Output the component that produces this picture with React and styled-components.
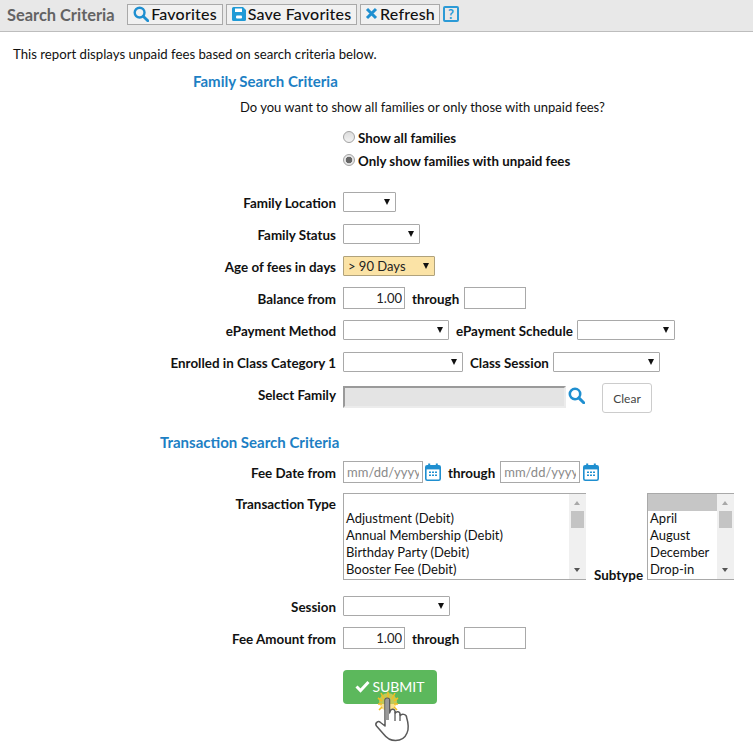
import React from 'react';
import styled, { createGlobalStyle } from 'styled-components';

const GlobalStyle = createGlobalStyle`
  html, body { margin: 0; padding: 0; background: #fff; }
  body { font-family: Lato, "Open Sans", sans-serif; font-size: 13px; color: #111; }
`;

const Page = styled.div`
  position: relative;
  width: 753px;
  height: 747px;
  overflow: hidden;
`;

const Toolbar = styled.div`
  display: flex;
  align-items: center;
  height: 32px;
  box-sizing: border-box;
  padding: 0 0 3px 7px;
  background: #e8e8e8;
  border-bottom: 1px solid #bdbdbd;
`;

const ToolbarTitle = styled.div`
  width: 120px;
  font-size: 16.4px;
  font-weight: 700;
  color: #636363;
`;

const ToolButton = styled.button`
  display: flex;
  align-items: center;
  justify-content: center;
  gap: 2px;
  width: ${p => p.$width}px;
  height: 21px;
  margin-right: 3px;
  padding: 0 0 1px;
  border: 1px solid #a9a9a9;
  background: #f1f1f1;
  font-family: inherit;
  font-size: 16px;
  font-weight: 500;
  letter-spacing: 0.2px;
  color: #111;
`;

const HelpBox = styled.span`
  display: flex;
  align-items: center;
  justify-content: center;
  box-sizing: border-box;
  width: 16px;
  height: 16px;
  border: 2px solid #2b9ad6;
  border-radius: 2px;
  font-size: 13px;
  font-weight: 700;
  color: #2b9ad6;
`;

const Intro = styled.p`
  margin: 0;
  padding: 14px 0 0 13px;
  line-height: 17px;
  font-size: 13.2px;
`;

const SectionTitle = styled.h3`
  margin: 0;
  padding-left: ${p => p.$left}px;
  padding-top: ${p => p.$top}px;
  font-size: 15px;
  line-height: 18px;
  font-weight: 700;
  color: #1d7fc4;
`;

const Question = styled.p`
  margin: 0;
  padding: 9px 0 0 240px;
  font-size: 13px;
  line-height: 17px;
`;

const RadioList = styled.div`
  display: flex;
  flex-direction: column;
  gap: 6px;
  padding: 13px 0 0 343px;
`;

const RadioRow = styled.label`
  display: flex;
  align-items: center;
  height: 17px;
  font-weight: 700;
  font-size: 13.3px;
`;

const Radio = styled.input.attrs({ type: 'radio' })`
  appearance: none;
  box-sizing: border-box;
  width: 12px;
  height: 12px;
  margin: 0 3px 2px 0;
  border: 1px solid #a2a2a2;
  border-radius: 50%;
  background: linear-gradient(#dcdcdc, #f2f2f2);
  &:checked {
    background: radial-gradient(circle, #666 0 3px, #e6e6e6 3.6px);
  }
`;

const Rows = styled.div`
  display: flex;
  flex-direction: column;
  padding-top: ${p => p.$top}px;
`;

const Row = styled.div`
  display: flex;
  align-items: center;
  height: ${p => p.$height || 32}px;
`;

const FamilyRow = styled.div`
  display: flex;
  align-items: flex-start;
  height: 35px;
`;

const Label = styled.label`
  width: 336px;
  margin-right: 7px;
  padding-top: 2px;
  flex: none;
  text-align: right;
  font-size: 13.4px;
  font-weight: 700;
`;

const FamilyLabel = styled(Label)`
  padding-top: 0;
  line-height: 34px;
`;

const InlineLabel = styled.span`
  margin: 0 4px 0 7px;
  padding-top: 2px;
  font-size: 13.4px;
  font-weight: 700;
`;

const ThroughLabel = styled(InlineLabel)`
  margin-right: 5px;
`;

const SelectWrap = styled.span`
  position: relative;
  display: block;
  width: ${p => p.$width}px;
  height: 20px;
  &::after {
    content: '';
    position: absolute;
    right: 6px;
    top: 7px;
    border-left: 3.5px solid transparent;
    border-right: 3.5px solid transparent;
    border-top: 6px solid #111;
    pointer-events: none;
  }
`;

const Select = styled.select`
  appearance: none;
  display: block;
  box-sizing: border-box;
  width: 100%;
  height: 100%;
  padding: 0 0 0 4px;
  border: 1px solid ${p => (p.$highlight ? '#b0a27c' : '#a9a9a9')};
  border-radius: 1px;
  background: ${p => (p.$highlight ? '#fbe3a6' : '#fff')};
  font-family: inherit;
  font-size: 13px;
  color: #222;
`;

const Amount = styled.input`
  box-sizing: border-box;
  width: 62px;
  height: 22px;
  padding: 0 2px;
  border: 1px solid #a9a9a9;
  text-align: right;
  font-family: inherit;
  font-size: 13px;
  color: #222;
  outline: none;
`;

const FamilyInput = styled.input`
  box-sizing: border-box;
  width: 223px;
  height: 22px;
  margin-top: 8px;
  border: 0;
  border-top: 2px solid #9a9a9a;
  border-left: 2px solid #9a9a9a;
  border-right: 2px solid #ececec;
  border-bottom: 2px solid #ececec;
  background: #e4e4e4;
  outline: none;
`;

const FamilySearch = styled.span`
  margin: 9px 0 0 2px;
`;

const ClearButton = styled.button`
  width: 50px;
  height: 30px;
  margin: 5px 0 0 17px;
  border: 1px solid #ccc;
  border-radius: 3px;
  background: #fff;
  font-family: inherit;
  font-size: 12px;
  color: #444;
`;

const DateInput = styled.input`
  box-sizing: border-box;
  width: 80px;
  height: 22px;
  padding: 0 3px;
  border: 1px solid #a9a9a9;
  font-family: inherit;
  font-size: 13px;
  outline: none;
  &::placeholder { color: #8a8a8a; opacity: 1; }
`;

const TypeRow = styled.div`
  display: flex;
  align-items: flex-start;
  height: 87px;
  margin: 1px 0 10px;
`;

const TypeLabel = styled(Label)`
  padding-top: 3px;
`;

const SubtypeLabel = styled.span`
  position: relative;
  top: 4px;
  align-self: flex-end;
  margin: 0 4px 0 8px;
  font-size: 13.4px;
  font-weight: 700;
  line-height: 17px;
`;

const ListBox = styled.div`
  display: flex;
  box-sizing: border-box;
  width: ${p => p.$width}px;
  height: 87px;
  border: 1px solid #a9a9a9;
  border-right: 0;
  overflow: hidden;
`;

const ListOptions = styled.div`
  flex: 1;
  min-width: 0;
`;

const ListOption = styled.div`
  height: 17px;
  line-height: 15px;
  padding-left: 2px;
  font-size: 13px;
  white-space: nowrap;
  background: ${p => (p.$selected ? '#c6c6c6' : 'transparent')};
`;

const ScrollTrack = styled.div`
  position: relative;
  width: 17px;
  flex: none;
  background: #f0f0f0;
`;

const ScrollThumb = styled.div`
  position: absolute;
  top: 17px;
  left: 2px;
  width: 13px;
  height: 17px;
  background: #c4c4c4;
`;

const ScrollArrow = styled.span`
  position: absolute;
  left: 5px;
  ${p => (p.$up ? 'top: 7px;' : 'bottom: 7px;')}
  border-left: 3.5px solid transparent;
  border-right: 3.5px solid transparent;
  ${p => (p.$up ? 'border-bottom: 4px solid #a8a8a8;' : 'border-top: 4px solid #555;')}
`;

const SubmitRow = styled.div`
  padding: 16px 0 0 343px;
`;

const SubmitButton = styled.button`
  display: flex;
  align-items: center;
  justify-content: center;
  gap: 2px;
  width: 94px;
  height: 34px;
  padding: 0 0 2px;
  border: 0;
  border-radius: 4px;
  background: #5cb85c;
  font-family: inherit;
  font-size: 14px;
  color: #fff;
`;

const Pointer = styled.svg`
  position: absolute;
  left: 372px;
  top: 688px;
`;

const Icon = styled.svg`
  display: block;
  flex: none;
  margin-left: ${p => p.$left || 0}px;
`;

const SearchIcon = ({ size = 16 }) => (
  <Icon width={size} height={size} viewBox="0 0 16 16" fill="none" stroke="#1f8fd0" strokeWidth="2.4">
    <circle cx="6.6" cy="6.6" r="4.9" />
    <path d="M10.2 10.2 L14.8 14.8" strokeLinecap="round" strokeWidth="2.8" />
  </Icon>
);

const SaveIcon = () => (
  <Icon width="14" height="14" viewBox="0 0 14 14">
    <path d="M1.5 0 H11 L14 3 V12.5 A1.5 1.5 0 0 1 12.5 14 H1.5 A1.5 1.5 0 0 1 0 12.5 V1.5 A1.5 1.5 0 0 1 1.5 0 Z" fill="#1f9ad6" />
    <rect x="3" y="1.5" width="7" height="3.5" fill="#fff" />
    <rect x="4" y="8.5" width="6" height="3" rx="1" fill="#fff" />
  </Icon>
);

const CloseIcon = () => (
  <Icon width="13" height="13" viewBox="0 0 13 13" stroke="#1f8fd0" strokeWidth="3">
    <path d="M2 2 L11 11 M11 2 L2 11" />
  </Icon>
);

const CalendarIcon = ({ left }) => (
  <Icon $left={left} width="16" height="18" viewBox="0 0 16 18">
    <rect x="0.8" y="2.8" width="14.4" height="14.4" rx="1.5" fill="#fff" stroke="#1f8fd0" strokeWidth="1.6" />
    <rect x="0.8" y="2.8" width="14.4" height="3.6" fill="#1f8fd0" />
    <rect x="3.2" y="0.5" width="2" height="3.5" fill="#1f8fd0" />
    <rect x="10.8" y="0.5" width="2" height="3.5" fill="#1f8fd0" />
    <path d="M4 8.5h2v1.6H4zM7 8.5h2v1.6H7zM10 8.5h2v1.6h-2zM4 11.5h2v1.6H4zM7 11.5h2v1.6H7zM10 11.5h2v1.6h-2z" fill="#1f8fd0" />
  </Icon>
);

const CheckIcon = () => (
  <Icon width="15" height="13" viewBox="0 0 15 13" fill="none" stroke="#fff" strokeWidth="3">
    <path d="M1.5 6.5 L5.5 10.5 L13.5 2" />
  </Icon>
);

const ClickPointer = () => (
  <Pointer width="42" height="56" viewBox="0 0 42 56">
    <circle cx="16" cy="14" r="9" fill="#f7d354" opacity="0.65" />
    <g stroke="#f2bd22" strokeWidth="1.6">
      <path d="M16 10 V4 M12 11 L9 5 M20 11 L23 5 M10 13 L6 10 M22 13 L26 10 M10 16 H6 M22 16 H26 M10 19 L7 22 M22 19 L25 22" />
    </g>
    <path
      d="M13 12 C13 9.5 17.5 9.5 17.5 12 V25 L18.5 22.5 C19.5 20.5 23 21 23 23.5 L23.5 25 C24.5 23 28 23.5 28 26 L28.5 27.5 C29.5 25.5 34.5 26 34.5 29 C36 34 37.5 40 35 45 C33 50 29.5 52.5 23.5 52.5 C17.5 52.5 14.5 50 11.5 46 L4.5 38 C2.5 35.5 6 32 8.5 34.5 L13 38 Z"
      fill="#fff"
      stroke="#5a5a5a"
      strokeWidth="1.5"
      strokeLinejoin="round"
    />
    <path d="M13.5 12 C13.5 10 17 10 17 12 V32 H13.5 Z" fill="#9a9a9a" />
    <path d="M23 24 V33 M28 26 V33" stroke="#5a5a5a" strokeWidth="1.3" />
  </Pointer>
);

const ListScroll = () => (
  <ScrollTrack>
    <ScrollArrow $up />
    <ScrollThumb />
    <ScrollArrow />
  </ScrollTrack>
);

const transactionTypes = ['', 'Adjustment (Debit)', 'Annual Membership (Debit)', 'Birthday Party (Debit)', 'Booster Fee (Debit)'];
const subtypes = ['', 'April', 'August', 'December', 'Drop-in'];

export default function App() {
  return (
    <Page>
      <GlobalStyle />
      <Toolbar>
        <ToolbarTitle>Search Criteria</ToolbarTitle>
        <ToolButton $width={96}><SearchIcon />Favorites</ToolButton>
        <ToolButton $width={131}><SaveIcon />Save Favorites</ToolButton>
        <ToolButton $width={80}><CloseIcon />Refresh</ToolButton>
        <HelpBox>?</HelpBox>
      </Toolbar>
      <Intro>This report displays unpaid fees based on search criteria below.</Intro>

      <SectionTitle $left={193} $top={9}>Family Search Criteria</SectionTitle>
      <Question>Do you want to show all families or only those with unpaid fees?</Question>
      <RadioList>
        <RadioRow><Radio name="families" />Show all families</RadioRow>
        <RadioRow><Radio name="families" defaultChecked />Only show families with unpaid fees</RadioRow>
      </RadioList>

      <Rows $top={17}>
        <Row>
          <Label>Family Location</Label>
          <SelectWrap $width={53}><Select /></SelectWrap>
        </Row>
        <Row>
          <Label>Family Status</Label>
          <SelectWrap $width={77}><Select /></SelectWrap>
        </Row>
        <Row>
          <Label>Age of fees in days</Label>
          <SelectWrap $width={92}>
            <Select $highlight defaultValue="90"><option value="90">&gt; 90 Days</option></Select>
          </SelectWrap>
        </Row>
        <Row>
          <Label>Balance from</Label>
          <Amount defaultValue="1.00" />
          <ThroughLabel>through</ThroughLabel>
          <Amount />
        </Row>
        <Row>
          <Label>ePayment Method</Label>
          <SelectWrap $width={106}><Select /></SelectWrap>
          <InlineLabel>ePayment Schedule</InlineLabel>
          <SelectWrap $width={98}><Select /></SelectWrap>
        </Row>
        <Row>
          <Label>Enrolled in Class Category 1</Label>
          <SelectWrap $width={120}><Select /></SelectWrap>
          <InlineLabel>Class Session</InlineLabel>
          <SelectWrap $width={107}><Select /></SelectWrap>
        </Row>
        <FamilyRow>
          <FamilyLabel>Select Family</FamilyLabel>
          <FamilyInput />
          <FamilySearch><SearchIcon size={17} /></FamilySearch>
          <ClearButton>Clear</ClearButton>
        </FamilyRow>
      </Rows>

      <SectionTitle $left={160} $top={20}>Transaction Search Criteria</SectionTitle>

      <Rows $top={0}>
        <Row $height={41}>
          <Label>Fee Date from</Label>
          <DateInput placeholder="mm/dd/yyyy" />
          <CalendarIcon left={2} />
          <ThroughLabel>through</ThroughLabel>
          <DateInput placeholder="mm/dd/yyyy" />
          <CalendarIcon left={3} />
        </Row>
        <TypeRow>
          <TypeLabel>Transaction Type</TypeLabel>
          <ListBox $width={243}>
            <ListOptions>
              {transactionTypes.map(t => <ListOption key={t}>{t}</ListOption>)}
            </ListOptions>
            <ListScroll />
          </ListBox>
          <SubtypeLabel>Subtype</SubtypeLabel>
          <ListBox $width={87}>
            <ListOptions>
              {subtypes.map(t => <ListOption key={t} $selected={t === ''}>{t}</ListOption>)}
            </ListOptions>
            <ListScroll />
          </ListBox>
        </TypeRow>
        <Row>
          <Label>Session</Label>
          <SelectWrap $width={107}><Select /></SelectWrap>
        </Row>
        <Row>
          <Label>Fee Amount from</Label>
          <Amount defaultValue="1.00" />
          <ThroughLabel>through</ThroughLabel>
          <Amount />
        </Row>
      </Rows>

      <SubmitRow>
        <SubmitButton><CheckIcon />SUBMIT</SubmitButton>
      </SubmitRow>
      <ClickPointer />
    </Page>
  );
}
